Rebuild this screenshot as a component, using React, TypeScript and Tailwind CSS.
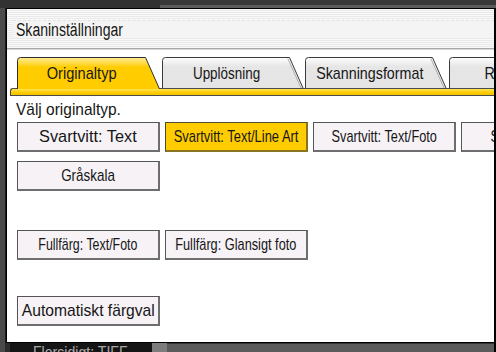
import React from "react";

function Tab({ label, active, sc, w }: { label: string; active?: boolean; sc: string; w: string }) {
  const gid = active ? "gA" : "gI";
  return (
    <div className={`relative shrink-0 h-[32px] ${w}`}>
      <svg className="absolute left-0 top-0" width="146" height="32" viewBox="0 0 146 32">
        <defs>
          <linearGradient id="gA" x1="0" y1="0" x2="0" y2="1">
            <stop offset="0" stopColor="#ffec94" />
            <stop offset="0.22" stopColor="#ffd633" />
            <stop offset="0.3" stopColor="#ffcc00" />
            <stop offset="1" stopColor="#ffcc00" />
          </linearGradient>
          <linearGradient id="gI" x1="0" y1="0" x2="0" y2="1">
            <stop offset="0" stopColor="#ffffff" />
            <stop offset="0.15" stopColor="#f2f2f2" />
            <stop offset="0.3" stopColor="#e6e6e6" />
            <stop offset="1" stopColor="#e4e4e4" />
          </linearGradient>
        </defs>
        {active ? (
          <path d="M0.5,32 L0.5,3.5 Q0.5,0.5 3.5,0.5 L128.5,0.5 L142.5,32" fill={`url(#${gid})`} stroke="#2e2e2e" strokeWidth="1" />
        ) : (
          <>
            <path d="M0.5,31 L0.5,3.5 Q0.5,0.5 3.5,0.5 L127.5,0.5 L141,31" fill={`url(#${gid})`} stroke="#3a3a3a" strokeWidth="1" />
            <path d="M125.8,1.5 L139,31" fill="none" stroke="#b0b0b0" strokeWidth="1" />
          </>
        )}
      </svg>
      <div className="absolute left-0 top-[7px] w-[129px] flex justify-center leading-[20px]">
        <span className={`inline-block whitespace-nowrap ${sc}`}>{label}</span>
      </div>
    </div>
  );
}

function Btn({ label, sc, yellow }: { label: string; sc: string; yellow?: boolean }) {
  return (
    <div
      className={
        yellow
          ? "shrink-0 w-[143px] h-[30px] flex items-center justify-center bg-[#ffcc00] border border-[#4f4a30] border-b-2 border-r-2 border-b-[#8a7420] border-r-[#8a7420]"
          : "shrink-0 w-[143px] h-[30px] flex items-center justify-center bg-[#f6f2f6] border border-[#555555] border-b-2 border-r-2 border-b-[#6e6e6e] border-r-[#6e6e6e]"
      }
    >
      <span className={`inline-block whitespace-nowrap leading-[20px] ${sc}`}>{label}</span>
    </div>
  );
}

export default function App() {
  return (
    <div className="w-[496px] h-[352px] overflow-hidden flex flex-col bg-[#3a3a3a] font-['Liberation_Sans',Arial,sans-serif] text-[17px] text-[#161616]">
      {/* top strip */}
      <div className="h-[8px] shrink-0 flex">
        <div className="w-[160px] bg-[#323232]" />
        <div className="flex-1 flex flex-col bg-[#383838]">
          <div className="h-[5px]" />
          <div className="h-[3px] bg-[#5b5b5b]" />
        </div>
      </div>
      {/* middle */}
      <div className="flex-1 min-h-0 flex">
        <div className="w-[5px] bg-[#4a4a4a]" />
        <div className="w-[1px] bg-[#1a1a1a]" />
        <div className="flex-1 min-w-0 bg-white border-t border-l border-b border-black flex flex-col overflow-hidden">
          {/* title */}
          <div className="h-[39px] shrink-0 pt-[11px] pl-[6px] bg-[repeating-linear-gradient(to_bottom,#f9f9f9_0px,#f9f9f9_1px,#e9e9e9_1px,#e9e9e9_2px)]">
            <div className="h-[18px] bg-[#f4f4f4] border-t border-dashed border-[#e2e2e2] pl-[3px] text-[18px] leading-[18px]">
              <span className="inline-block whitespace-nowrap origin-left scale-x-[0.78]">Skaninställningar</span>
            </div>
          </div>
          <div className="h-[1px] shrink-0 bg-[#a9a9a9]" />
          <div className="h-[1px] shrink-0 bg-[#d8d8d8]" />
          <div className="h-[7px] shrink-0" />
          {/* tabs */}
          <div className="relative z-10 h-[32px] shrink-0 pl-[10px] flex">
            <Tab label="Originaltyp" active sc="scale-x-[0.86]" w="w-[145px]" />
            <Tab label="Upplösning" sc="scale-x-[0.79]" w="w-[143px]" />
            <Tab label="Skanningsformat" sc="scale-x-[0.84]" w="w-[144px]" />
            <Tab label="Redigera" sc="scale-x-[0.84]" w="w-[144px]" />
          </div>
          <div className="-mt-px h-[8px] shrink-0 ml-[3px] rounded-tl-[3px] border-t border-l border-b border-[#4a4a4a] bg-[linear-gradient(to_bottom,#ffe55c_0%,#ffd21a_40%,#ffcc00_60%,#f2c200_100%)]" />
          {/* content */}
          <div className="pl-[9px] mt-[4px] h-[20px] shrink-0 leading-[20px]">
            <span className="inline-block whitespace-nowrap origin-left scale-x-[0.91]">Välj originaltyp.</span>
          </div>
          <div className="mt-[2px] pl-[10px] flex gap-[5px] shrink-0">
            <Btn label="Svartvitt: Text" sc="scale-x-[0.96]" />
            <Btn label="Svartvitt: Text/Line Art" sc="scale-x-[0.76]" yellow />
            <Btn label="Svartvitt: Text/Foto" sc="scale-x-[0.75]" />
            <Btn label="Svartvitt: Foto" sc="scale-x-[0.8]" />
          </div>
          <div className="mt-[9px] pl-[10px] flex gap-[5px] shrink-0">
            <Btn label="Gråskala" sc="scale-x-[0.79]" />
          </div>
          <div className="mt-[39px] pl-[10px] flex gap-[5px] shrink-0">
            <Btn label="Fullfärg: Text/Foto" sc="scale-x-[0.73]" />
            <Btn label="Fullfärg: Glansigt foto" sc="scale-x-[0.75]" />
          </div>
          <div className="mt-[36px] pl-[10px] flex gap-[5px] shrink-0">
            <Btn label="Automatiskt färgval" sc="scale-x-[0.92]" />
          </div>
        </div>
        <div className="w-[2px] bg-black" />
      </div>
      {/* bottom strip */}
      <div className="h-[9px] shrink-0 flex overflow-hidden">
        <div className="w-[5px] bg-[#4a4a4a]" />
        <div className="w-[5px] bg-[#2c2c2c]" />
        <div className="w-[142px] bg-[#151515] pl-[23px] leading-[20px] text-[#a8a8a8] overflow-hidden">
          <span className="inline-block whitespace-nowrap origin-left scale-x-[0.83]">Flersidigt: TIFF</span>
        </div>
        <div className="w-[15px] bg-[#7c7c7c]" />
        <div className="flex-1 bg-[#5b5b5b] border-t border-[#333]" />
        <div className="w-[2px] bg-black" />
      </div>
    </div>
  );
}
